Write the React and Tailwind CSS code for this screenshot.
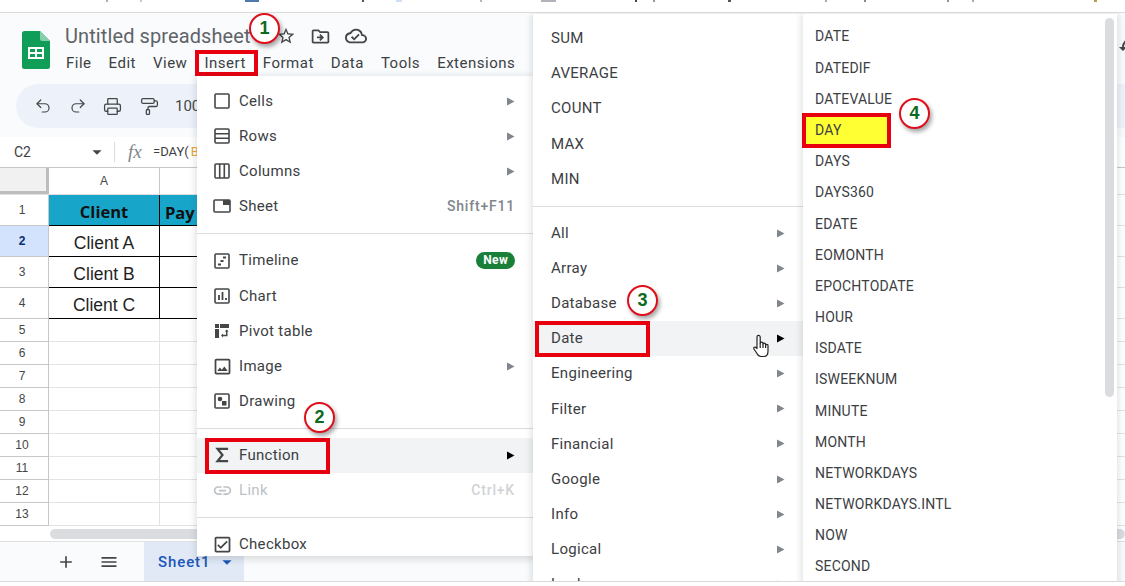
import React from 'react';
import { Undo2, Redo2, Printer, PaintRoller } from 'lucide-react';
import {
  MdStarBorder, MdOutlineDriveFileMove, MdOutlineCloudDone, MdOutlineCheckBox, MdOutlineImage, MdLink,
  MdAdd, MdMenu, MdArrowDropDown, MdHistory,
} from 'react-icons/md';

const INK = 'text-[#3c4043]';

const Ico = ({ children }) => (
  <svg viewBox="0 0 18 18" className="h-[18px] w-[18px]" fill="none" stroke="#444746" strokeWidth="1.6">{children}</svg>
);

const icons = {
  cells: <Ico><rect x="2" y="2" width="14" height="14" rx="1" /></Ico>,
  rows: <Ico><rect x="2" y="2" width="14" height="14" rx="1" /><path d="M2 6.7h14M2 11.3h14" /></Ico>,
  columns: <Ico><rect x="2" y="2" width="14" height="14" rx="1" /><path d="M6.7 2v14M11.3 2v14" /></Ico>,
  sheet: (
    <Ico>
      <rect x="1" y="3" width="16" height="12" rx="1" />
      <rect x="10" y="3" width="7" height="5" fill="#444746" stroke="none" />
    </Ico>
  ),
  timeline: (
    <Ico>
      <rect x="2" y="2" width="14" height="14" rx="1" />
      <path d="M5 12.5h3M7.5 9h3M10 5.5h3" strokeWidth="1.8" />
    </Ico>
  ),
  chart: (
    <Ico>
      <rect x="2" y="2" width="14" height="14" rx="1" />
      <path d="M6 13V8M9.5 13V5M13 13v-2" strokeWidth="1.8" />
    </Ico>
  ),
  pivot: (
    <svg viewBox="0 0 18 18" className="h-[18px] w-[18px]" fill="#444746">
      <rect x="2" y="2" width="4" height="4" />
      <rect x="7" y="2" width="9" height="4" />
      <rect x="2" y="7" width="4" height="9" />
      <path d="M8 13.5l2-2v1.3h3V9.5h-1.300l2-2 2 2H14.500v4.800H10v1.200z" />
    </svg>
  ),
  image: <MdOutlineImage size={21} color="#444746" />,
  drawing: (
    <Ico>
      <rect x="2" y="2" width="14" height="14" rx="1" />
      <circle cx="7" cy="7" r="2.300" fill="#444746" stroke="none" />
      <rect x="9" y="9" width="4.500" height="4.500" fill="#444746" stroke="none" />
    </Ico>
  ),
  sigma: (
    <svg viewBox="0 0 18 18" className="h-[18px] w-[18px]" fill="none" stroke="#444746" strokeWidth="2.200">
      <path d="M14 4V2.800H4.500L9.500 9l-5 6.200H14V14" />
    </svg>
  ),
  link: <MdLink size={21} color="#bdc1c6" />,
  checkbox: <MdOutlineCheckBox size={21} color="#444746" />,
};

const Arrow = ({ dark }) => (
  <svg viewBox="0 0 9 9" className="h-[9px] w-[9px] shrink-0">
    <polygon points="1,0.500 8.500,4.500 1,8.500" fill={dark ? '#000000' : '#80868b'} />
  </svg>
);

// hand cursor over the Date row
const HandCursor = ({ className }) => (
  <svg viewBox="0 0 17 24" className={className} fill="#ffffff" stroke="#222222" strokeWidth="1.2" strokeLinejoin="round">
    <path d="M4 14.500V3a1.600 1.600 0 0 1 3.200 0v6.500a1.400 1.400 0 0 1 2.800 0v1a1.300 1.300 0 0 1 2.600 0v1a1.200 1.200 0 0 1 2.400 0V17c0 3-1.500 5.500-4 5.500H8c-2 0-3-1-4-3L1 15c-.8-1.500 1-2.500 2-1.500z" />
    <path d="M7.200 9.500V14M10 10.500V14M12.600 11.500V14" fill="none" />
  </svg>
);

const Callout = ({ n, className }) => (
  <div className={`absolute z-30 flex h-[31px] w-[31px] items-center justify-center rounded-full border-[2.5px] border-[#de0f1a] bg-white text-[18px] font-bold text-[#0b6a1d] shadow-[2px_3px_4px_rgba(0,0,0,.35)] font-['Liberation_Sans',sans-serif] ${className}`}>
    {n}
  </div>
);

const RedBox = ({ className }) => (
  <div className={`absolute border-4 border-[#e8000f] ${className}`} />
);

const Divider = () => <div className="my-[9px] h-px bg-[#dadce0]" />;

const MenuRow = ({ icon, label, arrow, shortcut, badge, active, disabled, children }) => (
  <div className={`relative flex h-[35.15px] items-center pr-[18px] text-[15px] tracking-[0.3px] ${active ? 'bg-[#f1f3f4]' : ''}`}>
    {icon !== undefined && <span className="flex w-[42px] shrink-0 items-center justify-center pl-[8px]">{icon}</span>}
    <span className={`${icon === undefined ? 'pl-[18px]' : ''} ${disabled ? 'text-[#bdc1c6]' : INK}`}>{label}</span>
    <span className="flex-1" />
    {shortcut && <span className={`text-[14px] font-medium tracking-[0.8px] ${disabled ? 'text-[#d0d3d6]' : 'text-[#80868b]'}`}>{shortcut}</span>}
    {badge && <span className="rounded-full bg-[#188038] px-[7px] text-[12px] font-bold leading-[17px] text-white">{badge}</span>}
    {arrow && <Arrow dark={active} />}
    {children}
  </div>
);

const menuShadow = 'shadow-[0_2px_6px_2px_rgba(60,64,67,0.15)]';

const InsertMenu = () => (
  <div className={`absolute left-[197px] top-[63px] z-10 h-[480px] w-[336px] overflow-hidden bg-white pt-[7.500px] ${menuShadow}`}>
    <MenuRow icon={icons.cells} label="Cells" arrow />
    <MenuRow icon={icons.rows} label="Rows" arrow />
    <MenuRow icon={icons.columns} label="Columns" arrow />
    <MenuRow icon={icons.sheet} label="Sheet" shortcut="Shift+F11" />
    <Divider />
    <MenuRow icon={icons.timeline} label="Timeline" badge="New" />
    <MenuRow icon={icons.chart} label="Chart" />
    <MenuRow icon={icons.pivot} label="Pivot table" />
    <MenuRow icon={icons.image} label="Image" arrow />
    <MenuRow icon={icons.drawing} label="Drawing" />
    <Divider />
    <MenuRow icon={icons.sigma} label="Function" arrow active>
      <RedBox className="left-2 top-0 h-[36px] w-[125px]" />
    </MenuRow>
    <MenuRow icon={icons.link} label="Link" shortcut="Ctrl+K" disabled />
    <Divider />
    <MenuRow icon={icons.checkbox} label="Checkbox" />
  </div>
);

const FunctionMenu = () => (
  <div className={`absolute left-[533px] top-px z-20 h-[640px] w-[270px] bg-white pt-[6.800px] ${menuShadow}`}>
    {['SUM', 'AVERAGE', 'COUNT', 'MAX', 'MIN'].map((f) => <MenuRow key={f} label={f} />)}
    <Divider />
    {['All', 'Array', 'Database'].map((f) => <MenuRow key={f} label={f} arrow />)}
    <MenuRow label="Date" arrow active>
      <RedBox className="left-[2px] top-0 h-[36px] w-[115px]" />
      <HandCursor className="absolute left-[220px] top-[13px] h-[24px] w-[17px]" />
    </MenuRow>
    {['Engineering', 'Filter', 'Financial', 'Google', 'Info', 'Logical', 'Lookup'].map((f) => <MenuRow key={f} label={f} arrow />)}
  </div>
);

const dateFns = ['DATE', 'DATEDIF', 'DATEVALUE', 'DAY', 'DAYS', 'DAYS360', 'EDATE', 'EOMONTH', 'EPOCHTODATE', 'HOUR', 'ISDATE', 'ISWEEKNUM', 'MINUTE', 'MONTH', 'NETWORKDAYS', 'NETWORKDAYS.INTL', 'NOW', 'SECOND'];

const DateMenu = () => (
  <div className={`absolute left-[803px] top-px z-20 h-[640px] w-[314px] bg-white pt-[7.400px] ${menuShadow}`}>
    {dateFns.map((f) => (
      <div key={f} className={`relative flex h-[31.180px] items-center pl-[12px] text-[14px] tracking-[0.2px] ${INK}`}>
        {f === 'DAY' && <div className="absolute -left-px top-[-2px] h-[35px] w-[89px] border-4 border-[#e8000f] bg-[#ffff33]" />}
        <span className="relative">{f}</span>
      </div>
    ))}
    <div className="absolute right-[3px] top-[4px] h-[379px] w-[9px] rounded-full bg-[#dadce0]" />
  </div>
);

const menus = ['File', 'Edit', 'View', 'Insert', 'Format', 'Data', 'Tools', 'Extensions'];

const Header = () => (
  <div className="flex h-[63px] shrink-0 items-start bg-[#f9fbfd] pl-[22px]">
    <svg viewBox="0 0 28 38" className="mt-[18px] h-[38px] w-[28px] shrink-0">
      <path d="M2.500 0H18l10 10v25.500a2.500 2.500 0 0 1-2.500 2.500h-23A2.500 2.500 0 0 1 0 35.500v-33A2.500 2.500 0 0 1 2.500 0z" fill="#0f9d58" />
      <path d="M18 0l10 10H20a2 2 0 0 1-2-2z" fill="#87ceac" />
      <path d="M6 16h16v12H6z M8 18v3h5v-3z M15 18v3h5v-3z M8 23v3h5v-3z M15 23v3h5v-3z" fill="#ffffff" fillRule="evenodd" />
    </svg>
    <div className="ml-[15px] flex flex-col pt-[10px]">
      <div className="flex items-center">
        <span className="text-[20px] leading-[26px] tracking-[0.1px] text-[#5f6368]">Untitled spreadsheet</span>
        <MdStarBorder size={20} color="#444746" className="ml-[25px]" />
        <MdOutlineDriveFileMove size={21} color="#444746" className="ml-[14px]" />
        <MdOutlineCloudDone size={22} color="#444746" className="ml-[14px]" />
      </div>
      <div className="mt-[1px] flex h-[26px] items-center gap-[17px] pl-px text-[15px] tracking-[0.5px] text-[#3c4043]">
        {menus.map((m) => (
          <span key={m} className="relative">
            {m}
            {m === 'Insert' && <span className="absolute left-[-9px] top-[-2px] h-[26px] w-[63px] border-4 border-[#e8000f]" />}
          </span>
        ))}
      </div>
    </div>
    <MdHistory size={24} color="#444746" className="ml-auto mr-[-17px] mt-[22px]" />
  </div>
);

const Toolbar = () => (
  <div className="h-[61px] shrink-0 bg-[#f9fbfd] pl-[16px] pt-[8px]">
    <div className="flex h-[44px] items-center rounded-l-full bg-[#edf2fa] pl-[18px] text-[#444746]">
      <Undo2 size={18} strokeWidth={1.6} />
      <Redo2 size={18} strokeWidth={1.6} className="ml-[17px]" />
      <Printer size={19} strokeWidth={1.6} className="ml-[16px]" />
      <PaintRoller size={19} strokeWidth={1.6} className="ml-[18px]" />
      <span className="ml-[16px] text-[15px]">100%</span>
    </div>
  </div>
);

const FormulaBar = () => (
  <div className="flex h-[31px] shrink-0 items-center border-b border-[#c7c7c7] bg-white pl-[14px] text-[14px] text-[#3c4043]">
    <span className="w-[72px]">C2</span>
    <MdArrowDropDown size={22} color="#444746" />
    <span className="ml-[6px] h-[20px] w-px bg-[#dadce0]" />
    <span className="ml-[13px] w-[25px] font-['Liberation_Serif',serif] text-[19px] italic text-[#80868b]">fx</span>
    <span className="text-[13px]">=DAY(<span className="ml-[2px] text-[#e8a33d]">B2</span>)</span>
  </div>
);

const rowHeights = [31, 31, 31, 31, 23, 23, 23, 23, 23, 23, 23, 23, 23];
const clients = { 2: 'Client A', 3: 'Client B', 4: 'Client C' };

const Grid = () => (
  <div className="flex flex-1 flex-col bg-white">
    <div className="flex h-[27px] shrink-0 border-b border-[#e0e0e0]">
      <div className="w-[49px] shrink-0 border-b-[3px] border-r-[3px] border-[#bdbdbd] bg-[#f1f1f1]" />
      <div className="flex w-[111px] shrink-0 items-center justify-center border-r border-[#c7c7c7] text-[12px] text-[#444746] font-['Liberation_Sans',sans-serif]">A</div>
      <div className="flex-1" />
    </div>
    {rowHeights.map((h, i) => {
      const n = i + 1;
      const data = n <= 4;
      return (
        <div key={n} className="flex shrink-0" style={{ height: h }}>
          <div className={`flex w-[49px] shrink-0 items-center justify-center border-b border-r border-[#c7c7c7] pr-[4px] text-[12px] font-['Liberation_Sans',sans-serif] ${n === 2 ? 'bg-[#d3e3fd] font-bold text-[#0b2e6f]' : 'text-[#444746]'}`}>{n}</div>
          {n === 1 ? (
            <>
              <div className="flex w-[111px] shrink-0 items-center justify-center border-b border-r border-black bg-[#17a5c9] pt-[4px] font-['Open_Sans',sans-serif] text-[16.500px] font-bold text-[#111111]">Client</div>
              <div className="w-[37px] shrink-0 border-b border-black bg-[#17a5c9] pl-[5px] pt-[3px] font-['Open_Sans',sans-serif] text-[16.500px] font-bold leading-[30px] text-[#111111]">Pay</div>
              <div className="flex-1 border-b border-[#e2e3e3]" />
            </>
          ) : (
            <>
              <div className={`flex w-[111px] shrink-0 items-center justify-center border-b border-r pt-[4px] font-['Liberation_Sans',sans-serif] text-[17.500px] text-[#1f1f1f] ${data ? 'border-black' : 'border-[#e2e3e3]'}`}>{clients[n]}</div>
              <div className={`w-[37px] shrink-0 border-b ${data ? 'border-black' : 'border-[#e2e3e3]'}`} />
              <div className="flex-1 border-b border-[#e2e3e3]" />
            </>
          )}
        </div>
      );
    })}
    <div className="flex h-[15px] shrink-0 items-center bg-white pl-[50px]">
      <div className="h-[10px] flex-1 rounded-full bg-[#dadce0]" />
    </div>
  </div>
);

const TabBar = () => (
  <div className="flex h-[41px] shrink-0 items-stretch border-t border-[#e0e0e0] bg-[#f9fbfd] pl-[56px] text-[#444746]">
    <span className="flex w-[20px] items-center justify-center"><MdAdd size={20} /></span>
    <span className="ml-[23px] flex w-[20px] items-center justify-center"><MdMenu size={22} /></span>
    <div className="ml-[25px] flex w-[100px] items-center justify-between bg-[#e1e9f7] pl-[14px] pr-[6px] text-[15px] font-medium tracking-[0.9px] text-[#1a56b8]">
      <span>Sheet1</span>
      <MdArrowDropDown size={22} />
    </div>
  </div>
);

// tops of the bookmarks bar text, cut off by the crop
const clipped = [
  [106, 2, '#a9b0ba'], [140, 2, '#c4c8ce'], [245, 14, '#4f78b0'], [362, 2, '#555555'], [396, 6, '#cfe0f2'],
  [480, 2, '#b5b5b5'], [541, 15, '#b0b4ba'], [635, 2, '#444444'], [653, 2, '#999999'], [728, 3, '#555555'],
  [825, 2, '#aaaaaa'], [864, 2, '#888888'], [947, 2, '#8a94a3'], [972, 2, '#aaaaaa'], [1094, 3, '#b89a50'],
];

export default function App() {
  return (
    <div className="flex h-[586px] w-[1125px] flex-col overflow-hidden bg-white font-['Roboto',sans-serif]">
      <svg className="h-[13px] w-full shrink-0 border-b border-[#d9d9d9]">
        {clipped.map(([x, w, c]) => <rect key={x} x={x} y="0" width={w} height="2" fill={c} />)}
      </svg>
      <div className="relative flex h-[568px] shrink-0 flex-col overflow-hidden">
        <Header />
        <Toolbar />
        <FormulaBar />
        <Grid />
        <TabBar />
        <InsertMenu />
        <FunctionMenu />
        <DateMenu />
        <Callout n="1" className="left-[249px] top-0" />
        <Callout n="2" className="left-[304px] top-[389px]" />
        <Callout n="3" className="left-[627px] top-[272px]" />
        <Callout n="4" className="left-[899px] top-[85px]" />
      </div>
      <div className="h-[5px] shrink-0 border-t border-[#d9d9d9] bg-white" />
    </div>
  );
}
